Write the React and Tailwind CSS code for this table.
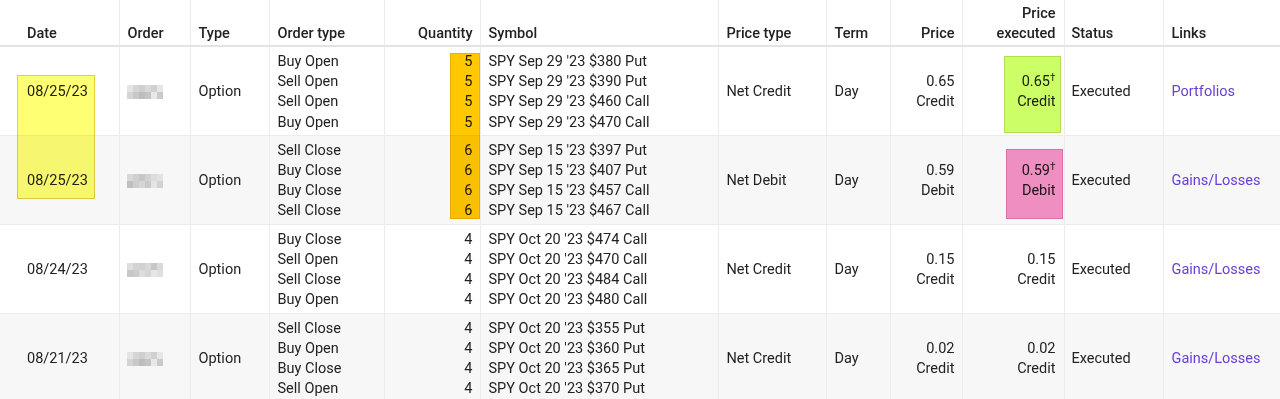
const cols = [
  { key: 'date', label: 'Date', w: 'w-[119px]', align: 'text-left pl-[27px]' },
  { key: 'order', label: 'Order', w: 'w-[71px]', align: 'text-left pl-2' },
  { key: 'type', label: 'Type', w: 'w-[79px]', align: 'text-left pl-2' },
  { key: 'otype', label: 'Order type', w: 'w-[115px]', align: 'text-left pl-2' },
  { key: 'qty', label: 'Quantity', w: 'w-[96px]', align: 'text-right pr-[7px]' },
  { key: 'sym', label: 'Symbol', w: 'w-[238px]', align: 'text-left pl-2' },
  { key: 'ptype', label: 'Price type', w: 'w-[108px]', align: 'text-left pl-2' },
  { key: 'term', label: 'Term', w: 'w-[64px]', align: 'text-left pl-2' },
  { key: 'price', label: 'Price', w: 'w-[72px]', align: 'text-right pr-[7px]' },
  { key: 'pexec', label: 'Price executed', w: 'w-[102px]', align: 'text-right pr-[8px]' },
  { key: 'status', label: 'Status', w: 'w-[99px]', align: 'text-left pl-[7px]' },
  { key: 'links', label: 'Links', w: 'w-[117px]', align: 'text-left pl-2' },
]

const rows = [
  {
    date: '08/25/23', blur: 0, legs: ['Buy Open', 'Sell Open', 'Sell Open', 'Buy Open'], qty: 5,
    syms: ["SPY Sep 29 '23 $380 Put", "SPY Sep 29 '23 $390 Put", "SPY Sep 29 '23 $460 Call", "SPY Sep 29 '23 $470 Call"],
    ptype: 'Net Credit', price: '0.65', side: 'Credit', dagger: true, link: 'Portfolios', bg: 'bg-white',
  },
  {
    date: '08/25/23', blur: 1, legs: ['Sell Close', 'Buy Close', 'Buy Close', 'Sell Close'], qty: 6,
    syms: ["SPY Sep 15 '23 $397 Put", "SPY Sep 15 '23 $407 Put", "SPY Sep 15 '23 $457 Call", "SPY Sep 15 '23 $467 Call"],
    ptype: 'Net Debit', price: '0.59', side: 'Debit', dagger: true, link: 'Gains/Losses', bg: 'bg-[#f7f7f7]',
  },
  {
    date: '08/24/23', blur: 2, legs: ['Buy Close', 'Sell Open', 'Sell Close', 'Buy Open'], qty: 4,
    syms: ["SPY Oct 20 '23 $474 Call", "SPY Oct 20 '23 $470 Call", "SPY Oct 20 '23 $484 Call", "SPY Oct 20 '23 $480 Call"],
    ptype: 'Net Credit', price: '0.15', side: 'Credit', dagger: false, link: 'Gains/Losses', bg: 'bg-white',
  },
  {
    date: '08/21/23', blur: 0, legs: ['Sell Close', 'Buy Open', 'Buy Close', 'Sell Open'], qty: 4,
    syms: ["SPY Oct 20 '23 $355 Put", "SPY Oct 20 '23 $360 Put", "SPY Oct 20 '23 $365 Put", "SPY Oct 20 '23 $370 Put"],
    ptype: 'Net Credit', price: '0.02', side: 'Credit', dagger: false, link: 'Gains/Losses', bg: 'bg-[#f7f7f7]',
  },
]

// pixelated (redacted) order numbers
const blurs = [
  ['bg-[#e4e4e4]', 'bg-[#d6d6d6]', 'bg-[#cfcfcf]', 'bg-[#dadada]', 'bg-[#d0d0d0]', 'bg-[#e6e6e6]', 'bg-[#d4d4d4]', 'bg-[#c8c8c8]', 'bg-[#bdbdbd]', 'bg-[#c4c4c4]', 'bg-[#e8e8e8]', 'bg-[#cacaca]'],
  ['bg-[#d8d8d8]', 'bg-[#cfcfcf]', 'bg-[#c6c6c6]', 'bg-[#d2d2d2]', 'bg-[#dcdcdc]', 'bg-[#e2e2e2]', 'bg-[#bfbfbf]', 'bg-[#cdcdcd]', 'bg-[#d6d6d6]', 'bg-[#c9c9c9]', 'bg-[#e4e4e4]', 'bg-[#d2d2d2]'],
  ['bg-[#dedede]', 'bg-[#d3d3d3]', 'bg-[#d0d0d0]', 'bg-[#d8d8d8]', 'bg-[#c7c7c7]', 'bg-[#d9d9d9]', 'bg-[#c8c8c8]', 'bg-[#cccccc]', 'bg-[#dcdcdc]', 'bg-[#d5d5d5]', 'bg-[#e6e6e6]', 'bg-[#dfdfdf]'],
]

function Blur({ v }) {
  return (
    <div className="grid grid-cols-6 w-[36px] h-[14px]">
      {blurs[v].map((c, i) => (
        <div key={i} className={`${c} h-[7px]`} />
      ))}
    </div>
  )
}

const lines = (arr) => arr.map((t, i) => <div key={i}>{t}</div>)

export default function App() {
  return (
    <div className="relative h-[399px] w-[1280px] overflow-hidden bg-white text-[#222] text-[14.5px] leading-[20.25px]" style={{ fontFamily: 'Roboto, "Liberation Sans", sans-serif' }}>
      <table className="table-fixed border-collapse w-[1280px]">
        <thead>
          <tr className="h-[46px] border-b-2 border-[#e3e3e3]">
            {cols.map((c) => (
              <th key={c.key} className={`${c.w} ${c.align} align-bottom pb-[1px] font-medium border-r border-[#ececec] last:border-r-0`}>
                {c.key === 'pexec' ? <><div>Price</div><div>executed</div></> : c.label}
              </th>
            ))}
          </tr>
        </thead>
        <tbody>
          {rows.map((r, i) => (
            <tr key={i} className={`${r.bg} h-[89px] border-b border-[#ececec] [&>td]:pt-[3px]`}>
              <td className="pl-[27px] border-r border-[#ececec]">{r.date}</td>
              <td className="pl-[7px] border-r border-[#ececec]"><Blur v={r.blur} /></td>
              <td className="pl-2 border-r border-[#ececec]">Option</td>
              <td className="pl-2 border-r border-[#ececec]">{lines(r.legs)}</td>
              <td className="pr-[7px] text-right border-r border-[#ececec]">{lines([r.qty, r.qty, r.qty, r.qty])}</td>
              <td className="pl-2 border-r border-[#ececec]">{lines(r.syms)}</td>
              <td className="pl-2 border-r border-[#ececec]">{r.ptype}</td>
              <td className="pl-2 border-r border-[#ececec]">Day</td>
              <td className="pr-[7px] text-right border-r border-[#ececec]">{lines([r.price, r.side])}</td>
              <td className="pr-[8px] text-right border-r border-[#ececec]">
                <div>{r.price}{r.dagger && <sup className="text-[10px] -top-[5px]">†</sup>}</div>
                <div>{r.side}</div>
              </td>
              <td className="pl-[7px] border-r border-[#ececec]">Executed</td>
              <td className="pl-2 text-[#6a3fd5]">{r.link}</td>
            </tr>
          ))}
        </tbody>
      </table>

      {/* highlight marks drawn over the table */}
      <div className="absolute left-[17px] top-[75px] w-[78px] h-[124px] bg-[#ffff73] border border-[#e2d23e] mix-blend-multiply" />
      <div className="absolute left-[450px] top-[53px] w-[30px] h-[166px] bg-[#ffc800] border border-[#efb100] mix-blend-multiply" />
      <div className="absolute left-[1004px] top-[56px] w-[57px] h-[77px] bg-[#ccff66] border border-[#b3e050] mix-blend-multiply" />
      <div className="absolute left-[1006px] top-[149px] w-[57px] h-[70px] bg-[#f794c8] border border-[#e274b0] mix-blend-multiply" />
    </div>
  )
}
